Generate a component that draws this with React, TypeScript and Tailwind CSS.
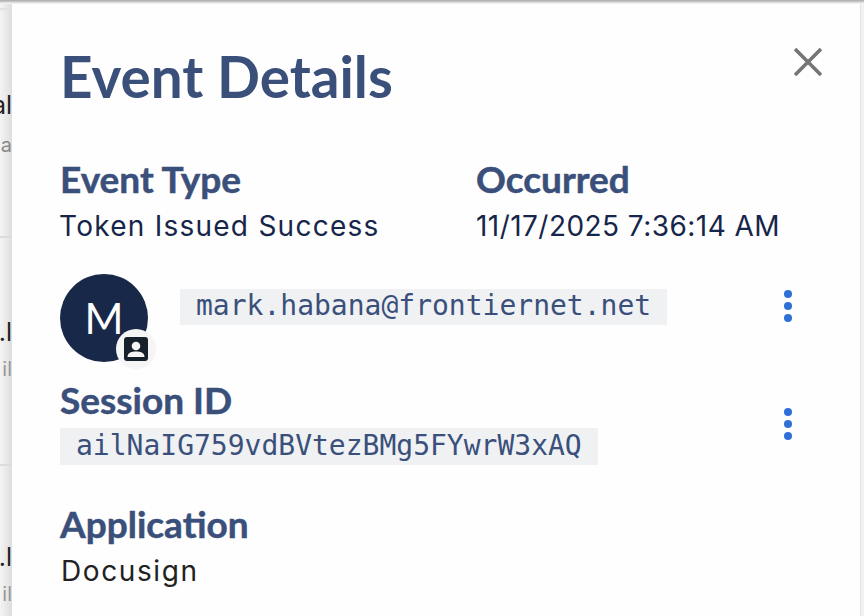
import React from "react";

const lato = "font-['Lato',sans-serif]";
const body = "font-['Inter',sans-serif]";
const mono = "font-['DejaVu_Sans_Mono',monospace]";

function Dots() {
  return (
    <button className="flex flex-col gap-[4px] items-center w-[8px]">
      <span className="w-[8px] h-[8px] rounded-full bg-[#2f6fd6]" />
      <span className="w-[8px] h-[8px] rounded-full bg-[#2f6fd6]" />
      <span className="w-[8px] h-[8px] rounded-full bg-[#2f6fd6]" />
    </button>
  );
}

function Heading({ children }: { children: React.ReactNode }) {
  return <h3 className={`${lato} text-[37px] leading-[44px] font-bold [-webkit-text-stroke:0.5px_#3a507b] text-[#3a507b]`}>{children}</h3>;
}

function Strip() {
  return (
    <div className="w-[12px] shrink-0 overflow-hidden bg-gradient-to-r from-[#f4f4f4] to-[#dedede] flex flex-col relative">
      <div className="h-[10px] border-b-2 border-[#e2e2e2]" />
      <div className={`${body} mt-[79px] h-[32px] text-[25px] leading-[32px] whitespace-nowrap text-[#222] flex justify-end`}>al</div>
      <div className={`${body} mt-[12px] h-[24px] text-[20px] leading-[24px] whitespace-nowrap text-[#888] flex justify-end`}>pa</div>
      <div className="mt-[79px] h-[2px] bg-[#dcdcdc]" />
      <div className={`${body} mt-[78px] h-[32px] text-[25px] leading-[32px] whitespace-nowrap text-[#222] flex justify-end`}>.l</div>
      <div className={`${body} mt-[9px] h-[24px] text-[20px] leading-[24px] whitespace-nowrap text-[#999] flex justify-end`}>il</div>
      <div className="mt-[83px] h-[2px] bg-[#dcdcdc]" />
      <div className={`${body} mt-[75px] h-[32px] text-[25px] leading-[32px] whitespace-nowrap text-[#222] flex justify-end`}>.l</div>
      <div className={`${body} mt-[9px] h-[24px] text-[20px] leading-[24px] whitespace-nowrap text-[#999] flex justify-end`}>il</div>
    </div>
  );
}

export default function App() {
  return (
    <div className="w-[864px] h-[616px] overflow-hidden bg-white flex relative">
      <div className="absolute inset-x-0 top-0 h-[4px] bg-gradient-to-b from-[#a8a8a8] to-[#fdfdfd] z-10" />
      <Strip />
      <main className="flex-1 min-w-0 bg-[#fefefe] pl-[48px] pr-[36px] pt-[41px]">
        <header className="flex justify-between items-start">
          <h2 className={`${lato} text-[56.6px] leading-[70px] font-bold text-[#3a507b]`}>Event Details</h2>
          <button className="mt-[7px] mr-[2px]" aria-label="Close">
            <svg width="28" height="28" viewBox="0 0 28 28" fill="none" stroke="#757575" strokeWidth="3.6">
              <path d="M1 1 L27 27 M27 1 L1 27" />
            </svg>
          </button>
        </header>

        <section className="flex mt-[46px]">
          <div className="w-[416px]">
            <Heading>Event Type</Heading>
            <p className={`${body} text-[28px] leading-[38px] text-[#16264a] tracking-[1.25px] mt-[6px] -ml-[1px]`}>Token Issued Success</p>
          </div>
          <div>
            <Heading>Occurred</Heading>
            <p className={`${body} text-[28px] leading-[38px] text-[#16264a] tracking-[0.45px] mt-[6px]`}>11/17/2025 7:36:14 AM</p>
          </div>
        </section>

        <section className="flex items-start mt-[29px]">
          <div className="relative w-[88px] h-[88px] shrink-0 rounded-full bg-[#182848] flex items-center justify-center">
            <span className={`${lato} text-[42px] leading-none text-white`}>M</span>
            <span className="absolute left-[56px] top-[55px] w-[40px] h-[40px] rounded-full bg-[#f5f5f5] flex items-center justify-center">
              <svg width="24" height="24" viewBox="0 0 24 24">
                <rect x="0" y="0" width="24" height="24" rx="3" fill="#17212b" />
                <circle cx="12" cy="9" r="4.3" fill="#f5f5f5" />
                <path d="M3.5 20 C3.5 15.5 8 14.5 12 14.5 C16 14.5 20.5 15.5 20.5 20 Z" fill="#f5f5f5" />
              </svg>
            </span>
          </div>
          <code className={`${mono} ml-[32px] mt-[15px] w-[487px] h-[36px] bg-[#f0f1f3] pl-[16px] text-[28px] leading-[34px] text-[#3a507b]`}>mark.habana@frontiernet.net</code>
          <div className="ml-[117px] mt-[16px]"><Dots /></div>
        </section>

        <section className="flex mt-[16px]">
          <div>
            <Heading>Session ID</Heading>
            <code className={`${mono} block mt-[6px] w-[538px] h-[37px] bg-[#f0f1f3] pl-[16px] text-[28px] leading-[36px] text-[#3a507b]`}>ailNaIG759vdBVtezBMg5FYwrW3xAQ</code>
          </div>
          <div className="mt-[30px] ml-[186px]"><Dots /></div>
        </section>

        <section className="mt-[37px]">
          <Heading>Application</Heading>
          <p className={`${body} text-[28px] leading-[38px] text-[#222] tracking-[1.6px] mt-[6px] pl-[1px]`}>Docusign</p>
        </section>
      </main>
      <div className="w-[4px] shrink-0 bg-[#f2f2f2] border-l border-[#e2e2e2]" />
    </div>
  );
}
